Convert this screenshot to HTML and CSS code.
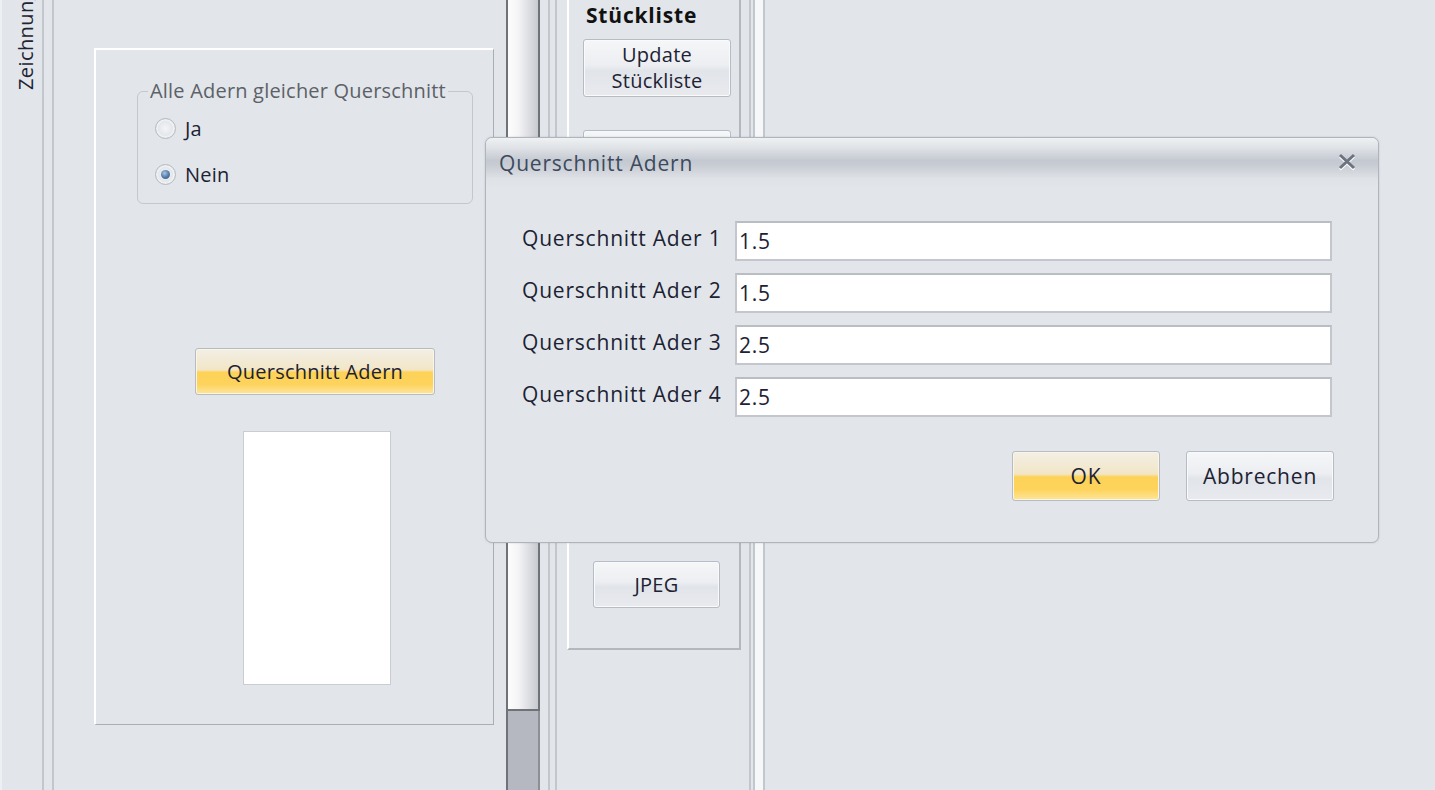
FILE: index.html
```html
<!DOCTYPE html>
<html lang="de">
<head>
    <meta charset="UTF-8">
    <meta name="viewport" content="width=device-width, initial-scale=1.0">
    <title>Querschnitt Adern</title>
    <link rel="stylesheet" href="styles.css">
</head>
<body>
    <div class="app">
        <div class="sidebar">
            <span class="sidebar-label">Zeichnung</span>
        </div>
        <div class="splitter"></div>

        <div class="left-pane">
            <div class="panel">
                <fieldset class="group">
                    <legend>Alle Adern gleicher Querschnitt</legend>
                    <label class="radio"><span class="radio-dot"></span>Ja</label>
                    <label class="radio"><span class="radio-dot checked"></span>Nein</label>
                </fieldset>
                <button class="btn btn-yellow btn-cross">Querschnitt Adern</button>
                <div class="preview"></div>
            </div>
        </div>

        <div class="scrollbar">
            <div class="scroll-thumb"></div>
            <div class="scroll-track"></div>
        </div>

        <div class="rail rail-left"></div>

        <div class="tool-panel">
            <h3>Stückliste</h3>
            <button class="btn btn-update">Update<br>Stückliste</button>
            <button class="btn btn-update btn-hidden"></button>
            <button class="btn btn-jpeg">JPEG</button>
        </div>

        <div class="rail rail-right"></div>
    </div>

    <div class="dialog">
        <div class="dialog-title">
            <span>Querschnitt Adern</span>
            <svg class="close-icon" width="20" height="18" viewBox="0 0 20 18">
                <path d="M3 2 L17 15 M17 2 L3 15" stroke="#fff" stroke-width="2.6" transform="translate(0 1.5)" />
                <path d="M3 2 L17 15 M17 2 L3 15" stroke="#6c7480" stroke-width="3" />
            </svg>
        </div>
        <div class="dialog-body">
            <div class="field-grid">
                <label>Querschnitt Ader 1</label>
                <input type="text" value="1.5">
                <label>Querschnitt Ader 2</label>
                <input type="text" value="1.5">
                <label>Querschnitt Ader 3</label>
                <input type="text" value="2.5">
                <label>Querschnitt Ader 4</label>
                <input type="text" value="2.5">
            </div>
            <div class="dialog-actions">
                <button class="btn btn-yellow btn-action">OK</button>
                <button class="btn btn-action">Abbrechen</button>
            </div>
        </div>
    </div>
</body>
</html>
```

FILE: styles.css
```css
:root {
    --bg-color: #e2e6ea;
    --text-color: #1c2233;
    --line-color: #c1c7cd;
    --border-color: #b7bcc4;
}

* {
    margin: 0;
    padding: 0;
    box-sizing: border-box;
}

body {
    font-family: 'Open Sans', 'Noto Sans', sans-serif;
    font-size: 20px;
    letter-spacing: 0.25px;
    background-color: var(--bg-color);
    color: var(--text-color);
    width: 1435px;
    height: 790px;
    overflow: hidden;
    position: relative;
}

.app {
    display: flex;
    height: 790px;
}

/* left tab strip */
.sidebar {
    width: 42px;
    flex: none;
    padding-left: 10px;
    border-left: 2px solid #edf0f2;
}

.sidebar-label {
    display: block;
    writing-mode: vertical-rl;
    transform: rotate(180deg);
    height: 112px;
    margin-top: -22px;
    font-size: 20px;
    letter-spacing: 0.4px;
    color: #1e2433;
}

.splitter {
    width: 12px;
    flex: none;
    border-left: 2px solid var(--line-color);
    border-right: 2px solid var(--line-color);
}

/* drawing settings pane */
.left-pane {
    width: 452px;
    flex: none;
    padding: 48px 0 0 40px;
}

.panel {
    width: 400px;
    height: 677px;
    border: 1px solid #a9aeb4;
    border-top-color: #fff;
    border-left-color: #fff;
    border-width: 2px 1px 1px 2px;
    padding: 0 0 0 41px;
}

.group {
    width: 336px;
    margin-top: 28px;
    border: 1px solid #c4c8ce;
    border-radius: 6px;
    padding: 1px 0 6px 17px;
}

.group legend {
    margin-left: -7px;
    padding: 0 2px;
    color: #5c6168;
    line-height: 26px;
    letter-spacing: 0.2px;
}

.radio {
    display: flex;
    align-items: center;
    height: 46px;
    gap: 9px;
}

.radio-dot {
    width: 21px;
    height: 21px;
    border-radius: 50%;
    border: 1px solid #b4bac2;
    background: radial-gradient(circle at 50% 50%, #f4f5f7 0, #dfe2e6 70%, #cfd3d9 100%);
    box-shadow: inset 0 0 0 2px #eef0f2;
    position: relative;
}

.radio-dot.checked::after {
    content: '';
    position: absolute;
    left: 5px;
    top: 5px;
    width: 9px;
    height: 9px;
    border-radius: 50%;
    background: radial-gradient(circle at 40% 35%, #a9c4e0 0, #4f78a6 55%, #2d4f7a 100%);
}

/* buttons */
.btn {
    font-family: inherit;
    font-size: 20px;
    letter-spacing: 0.25px;
    color: var(--text-color);
    border: 1px solid var(--border-color);
    border-radius: 3px;
    background: linear-gradient(to bottom, #f5f6f8 0%, #eceef1 45%, #e1e4e9 55%, #e8eaee 100%);
    box-shadow: inset 0 0 0 1px #f9fafb;
    line-height: 26px;
}

.btn-yellow {
    background: linear-gradient(to bottom, #f3efe5 0%, #f2e6c7 46%, #fdd257 52%, #fdd35c 78%, #fde59a 100%);
    box-shadow: inset 0 0 0 1px #fbf5e4;
}

.btn-cross {
    display: block;
    width: 240px;
    height: 47px;
    margin: 144px 0 0 58px;
}

.preview {
    width: 148px;
    height: 254px;
    margin: 36px 0 0 106px;
    background: #fff;
    border: 1px solid #c9cdd2;
}

/* scrollbar */
.scrollbar {
    width: 34px;
    flex: none;
    display: flex;
    flex-direction: column;
}

.scroll-thumb {
    height: 711px;
    border: 2px solid #6e7378;
    border-top: none;
    background: linear-gradient(to right, #fdfdfd 0%, #f4f4f6 35%, #d6d7dc 80%, #c9cad0 100%);
}

.scroll-track {
    flex: 1;
    background: #b5b8c0;
    border-right: 2px solid #8c9096;
    border-left: 2px solid #6e7378;
}

.rail {
    flex: none;
}

.rail-left {
    width: 9px;
    margin-left: 8px;
    background: linear-gradient(to right, var(--line-color) 0 2px, transparent 2px 7px, var(--line-color) 7px 9px);
}

.rail-right {
    width: 16px;
    margin-left: 8px;
    background: linear-gradient(to right, var(--line-color) 0 2px, transparent 2px 4px, var(--line-color) 4px 6px, #f6f7f8 6px 14px, var(--line-color) 14px 16px);
}

/* parts list panel */
.tool-panel {
    width: 174px;
    height: 650px;
    flex: none;
    margin-left: 10px;
    border-left: 2px solid #fff;
    border-right: 2px solid #b3b8be;
    border-bottom: 2px solid #b3b8be;
    padding: 2px 0 0 14px;
    display: flex;
    flex-direction: column;
    align-items: flex-start;
}

.tool-panel h3 {
    font-size: 21px;
    font-weight: 700;
    letter-spacing: 0.8px;
    padding-left: 3px;
    line-height: 26px;
    color: #111;
}

.btn-update {
    width: 148px;
    height: 58px;
    margin-top: 11px;
}

.btn-hidden {
    margin-top: 33px;
}

.btn-jpeg {
    width: 127px;
    height: 47px;
    margin: 373px 0 0 10px;
}

/* modal dialog */
.dialog {
    position: absolute;
    left: 485px;
    top: 137px;
    width: 894px;
    height: 406px;
    background: var(--bg-color);
    border: 1px solid #b0b5bd;
    border-radius: 7px;
    box-shadow: 0 0 2px rgba(120, 126, 136, 0.35);
    overflow: hidden;
    font-size: 21px;
    letter-spacing: 0.8px;
}

.dialog-title {
    height: 50px;
    display: flex;
    align-items: center;
    justify-content: space-between;
    padding: 0 21px 0 13px;
    color: #3d4a5d;
    background: linear-gradient(to bottom, #eff1f3 0%, #dfe2e6 20%, #c4c9d1 45%, #c8cdd4 55%, #dfe2e6 82%, #e3e6e9 100%);
}

.close-icon {
    display: block;
    margin-bottom: 2px;
}

.dialog-body {
    padding: 33px 0 0 36px;
}

.field-grid {
    display: grid;
    grid-template-columns: 200px 597px;
    column-gap: 13px;
    row-gap: 12px;
    align-items: center;
}

.field-grid label {
    line-height: 26px;
    margin-top: -7px;
}

.field-grid input {
    height: 40px;
    font-family: inherit;
    font-size: 21px;
    letter-spacing: 0.8px;
    color: var(--text-color);
    border: 2px solid #c3c7cd;
    border-top-color: #b9bdc4;
    background: #fff;
    padding: 0 2px;
    outline: none;
}

.dialog-actions {
    display: flex;
    justify-content: flex-end;
    gap: 26px;
    margin: 34px 44px 0 0;
}

.btn-action {
    width: 148px;
    height: 50px;
    font-size: 21px;
    letter-spacing: 0.8px;
}
```
